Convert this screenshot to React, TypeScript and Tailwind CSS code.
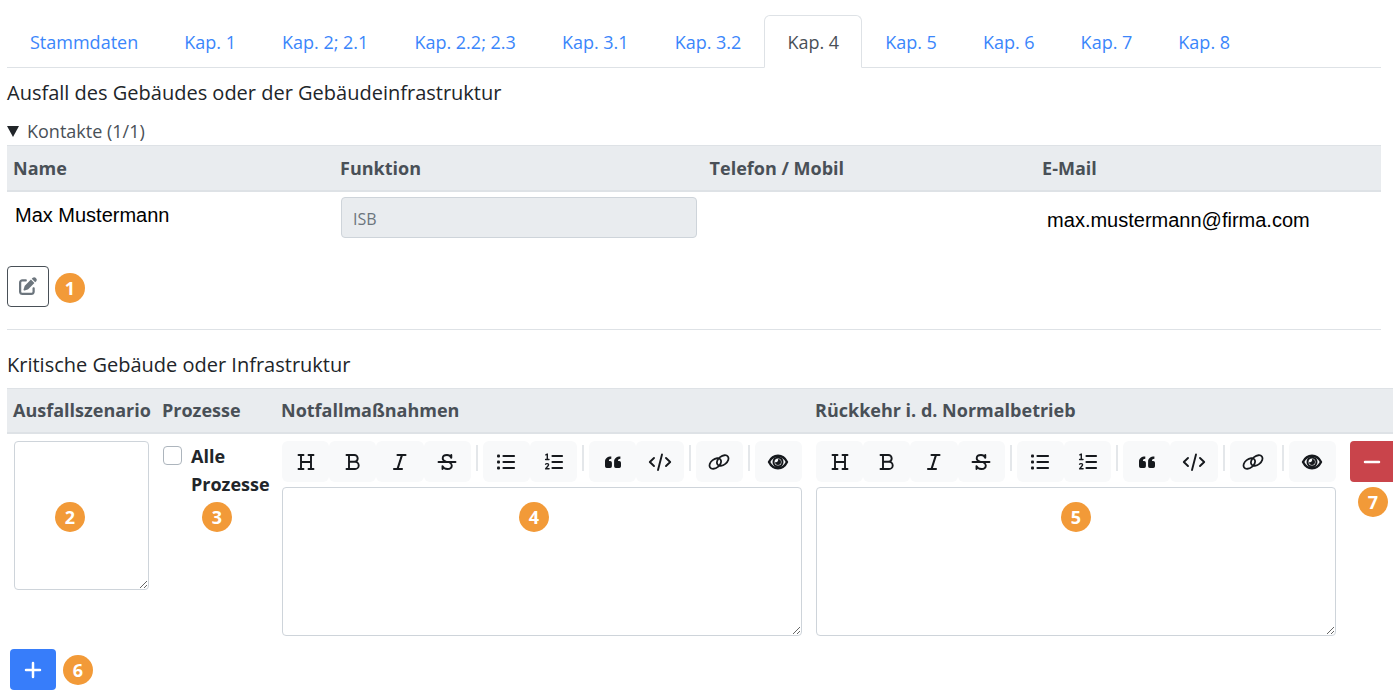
import { Fragment } from "react";
import type { ReactNode } from "react";
import { FaPenToSquare } from "react-icons/fa6";

const tabs = [
  "Stammdaten",
  "Kap. 1",
  "Kap. 2; 2.1",
  "Kap. 2.2; 2.3",
  "Kap. 3.1",
  "Kap. 3.2",
  "Kap. 4",
  "Kap. 5",
  "Kap. 6",
  "Kap. 7",
  "Kap. 8",
];

function Glyph({ children }: { children: ReactNode }) {
  return (
    <svg
      width="24"
      height="24"
      viewBox="0 0 24 24"
      fill="none"
      stroke="currentColor"
      strokeWidth="1.9"
      strokeLinecap="round"
      strokeLinejoin="round"
      aria-hidden="true"
    >
      {children}
    </svg>
  );
}

const icons = {
  heading: <path d="M4.5 5h5M14.5 5h5M4.5 19h5M14.5 19h5M7 5v14M17 5v14M7 12h10" />,
  bold: <path d="M5.5 5h7.8a3.4 3.4 0 0 1 0 6.8H8M5.5 19h8.6a3.6 3.6 0 0 0 0-7.2H13M8 5v14" />,
  italic: <path strokeWidth="2.1" d="M9.5 5h8M6 19h8M14 5l-4.500 14" />,
  strike: (
    <>
      <path d="M16.300 5v2.800C15.500 6 14 5 12 5 9.500 5 7.700 6.300 7.700 8.300c0 1.700 1.200 2.700 3.300 3.300M14.500 12.500c1.500.700 2.300 1.600 2.300 3 0 2.100-1.900 3.500-4.400 3.500-2.300 0-4.100-1-4.900-2.800V19" />
      <path d="M3.500 12h17" />
    </>
  ),
  bullets: (
    <>
      <path strokeWidth="2.200" d="M9.500 6h10.500M9.500 12h10.500M9.500 18h10.500" />
      <g fill="currentColor" stroke="none">
        <rect x="3" y="4.500" width="3" height="3" rx="1" />
        <rect x="3" y="10.500" width="3" height="3" rx="1" />
        <rect x="3" y="16.500" width="3" height="3" rx="1" />
      </g>
    </>
  ),
  numbers: (
    <>
      <path strokeWidth="2.200" d="M10.500 6H20M10.500 12H20M10.500 18H20" />
      <path strokeWidth="1.400" d="M3.800 4.800 5.300 4v5M3.600 9.500h3.400M3.600 14.200c.4-.8 3-1 3 .6 0 1.200-1.700 2-3 4h3.500" />
    </>
  ),
  quote: (
    <path
      fill="currentColor"
      stroke="none"
      d="M10.300 6.500v2.300C8.700 8.800 7.900 9.500 7.900 11h1.300a1.700 1.700 0 0 1 1.700 1.700v3.500a1.700 1.700 0 0 1-1.700 1.700H5.700A1.700 1.700 0 0 1 4 16.200v-4.400c0-3.300 2.200-5.300 6.300-5.300zM19.400 6.500v2.300C17.800 8.800 17 9.500 17 11h1.300a1.700 1.700 0 0 1 1.700 1.700v3.500a1.700 1.700 0 0 1-1.700 1.700h-3.500a1.700 1.700 0 0 1-1.700-1.700v-4.400c0-3.300 2.200-5.300 6.300-5.300z"
    />
  ),
  code: <path d="M6 8 1.800 12 6 16M18 8l4.200 4L18 16M14 4.500 10 20" />,
  link: (
    <g strokeWidth="1.800">
      <ellipse cx="8.300" cy="13.500" rx="6.600" ry="4.300" transform="rotate(-38 8.300 13.500)" />
      <ellipse cx="15.700" cy="10.500" rx="6.600" ry="4.300" transform="rotate(-38 15.700 10.500)" />
    </g>
  ),
  eye: (
    <>
      <path strokeWidth="2.400" d="M3 12c2-4 5.300-6.200 9-6.200s7 2.200 9 6.200c-2 4-5.300 6.200-9 6.200S5 16 3 12z" />
      <circle cx="12" cy="12" r="4.500" strokeWidth="2" />
      <path fill="currentColor" stroke="none" d="M12 9a3 3 0 1 1-3 3c1.600 1 3.800-.8 3-3z" />
    </>
  ),
};

const toolGroups = [
  [
    { label: "Überschrift", icon: icons.heading },
    { label: "Fett", icon: icons.bold },
    { label: "Kursiv", icon: icons.italic },
    { label: "Durchgestrichen", icon: icons.strike },
  ],
  [
    { label: "Liste", icon: icons.bullets },
    { label: "Nummerierte Liste", icon: icons.numbers },
  ],
  [
    { label: "Zitat", icon: icons.quote },
    { label: "Code", icon: icons.code },
  ],
  [{ label: "Link", icon: icons.link }],
  [{ label: "Vorschau", icon: icons.eye }],
];

function Badge({ children, className = "" }: { children: ReactNode; className?: string }) {
  return (
    <span
      className={`flex size-[30px] items-center justify-center rounded-full bg-[#f29a38] text-lg font-bold text-white ${className}`}
    >
      {children}
    </span>
  );
}

function Editor({ label }: { label: string }) {
  return (
    <div>
      <div className="flex h-[41px]" role="toolbar" aria-label={label}>
        {toolGroups.map((group, index) => (
          <Fragment key={index}>
            {index > 0 && <span className="mx-[5px] mt-1 h-[26px] w-[2px] shrink-0 bg-[#e4e7ea]" />}
            {group.map(({ label: name, icon }) => (
              <button
                key={name}
                type="button"
                aria-label={name}
                className="flex flex-1 items-center justify-center rounded-md bg-[#f8f9fa] text-[#16191d]"
              >
                <Glyph>{icon}</Glyph>
              </button>
            ))}
          </Fragment>
        ))}
      </div>
      <textarea
        aria-label={label}
        className="mt-[5px] block h-[149px] w-full resize rounded border border-[#ced4da] bg-white p-2"
      />
    </div>
  );
}

const headRow = "h-[45px] border-t border-b-2 border-t-[#dee2e6] border-b-[#dee2e6] bg-[#e9ecef] text-left text-[#495057]";
const headCell = "px-[6px] font-bold";

export default function App() {
  return (
    <main className="min-h-screen bg-white pt-[15px] pr-[7px] pl-[7px] font-['Open_Sans','Noto_Sans',sans-serif] text-lg leading-7 text-[#212529]">
      <div className="mr-3">
        <nav className="flex border-b border-[#dee2e6]">
          {tabs.map((tab) => (
            <a
              key={tab}
              href="#"
              aria-current={tab === "Kap. 4" ? "page" : undefined}
              className={`-mb-px rounded-t-md border px-[22px] pt-3 pb-[11px] whitespace-nowrap ${
                tab === "Kap. 4"
                  ? "border-[#dee2e6] border-b-white bg-white text-[#495057]"
                  : "border-transparent text-[#3b86fb]"
              }`}
            >
              {tab}
            </a>
          ))}
        </nav>

        <h2 className="mt-[11px] text-xl font-medium">Ausfall des Gebäudes oder der Gebäudeinfrastruktur</h2>

        <details open className="mt-[10px]">
          <summary className="flex list-none items-center gap-2 text-[#495057]">
            <svg width="12" height="12" viewBox="0 0 12 12" className="text-[#212529]">
              <path d="M0 1h12L6 12z" fill="currentColor" />
            </svg>
            Kontakte (1/1)
          </summary>
          <table className="w-full table-fixed border-collapse">
            <thead>
              <tr className={headRow}>
                <th className={`w-[23.8%] ${headCell}`}>Name</th>
                <th className={`w-[26.9%] ${headCell}`}>Funktion</th>
                <th className={`w-[24.2%] ${headCell}`}>Telefon / Mobil</th>
                <th className={headCell}>E-Mail</th>
              </tr>
            </thead>
            <tbody className="font-['Liberation_Sans',Arial,sans-serif] text-xl text-black">
              <tr className="h-[54px]">
                <td className="px-2 pb-[6px]">Max Mustermann</td>
                <td className="px-[7px] pb-[2px]">
                  <input
                    readOnly
                    aria-label="Funktion"
                    value="ISB"
                    className="block h-[41px] w-full rounded border border-[#ced4da] bg-[#e9ecef] px-[11px] pt-1 font-['Open_Sans','Noto_Sans',sans-serif] text-base text-[#6c757d]"
                  />
                </td>
                <td />
                <td className="px-[11px] pt-1">max.mustermann@firma.com</td>
              </tr>
            </tbody>
          </table>
        </details>

        <div className="mt-[21px] flex items-center gap-[6px]">
          <button
            type="button"
            aria-label="Kontakte bearbeiten"
            className="flex h-[41px] w-[42px] items-center justify-center rounded border border-[#495057] text-[#6c757d]"
          >
            <FaPenToSquare size={18} />
          </button>
          <Badge className="mt-1">1</Badge>
        </div>

        <hr className="mt-[22px] border-[#dee2e6]" />
        <h2 className="mt-[21px] text-xl font-medium">Kritische Gebäude oder Infrastruktur</h2>
      </div>

      <table className="mt-[9px] w-full table-fixed border-collapse">
        <thead>
          <tr className={headRow}>
            <th className={`w-[149px] ${headCell}`}>Ausfallszenario</th>
            <th className={`w-[119px] ${headCell}`}>Prozesse</th>
            <th className={headCell}>Notfallmaßnahmen</th>
            <th className={headCell}>Rückkehr i. d. Normalbetrieb</th>
            <td className="w-[50px]" />
          </tr>
        </thead>
        <tbody>
          <tr className="align-top">
            <td className="relative px-[7px] pt-[7px]">
              <textarea
                aria-label="Ausfallszenario"
                className="block h-[149px] w-full resize rounded border border-[#ced4da] bg-white p-2"
              />
              <Badge className="absolute top-[68px] left-12">2</Badge>
            </td>
            <td className="relative pt-2 pl-[7px]">
              <label className="flex gap-[9px] font-bold">
                <input
                  type="checkbox"
                  className="mt-1 size-[19px] shrink-0 appearance-none rounded border border-[#adb5bd] bg-white"
                />
                <span>Alle Prozesse</span>
              </label>
              <Badge className="absolute top-[68px] left-[46px]">3</Badge>
            </td>
            <td className="relative px-[7px] pt-[7px]">
              <Editor label="Notfallmaßnahmen" />
              <Badge className="absolute top-[68px] left-1/2 -ml-[23px]">4</Badge>
            </td>
            <td className="relative px-[7px] pt-[7px]">
              <Editor label="Rückkehr i. d. Normalbetrieb" />
              <Badge className="absolute top-[68px] left-1/2 -ml-[15px]">5</Badge>
            </td>
            <td className="pt-[7px] pl-[7px]">
              <button
                type="button"
                aria-label="Zeile entfernen"
                className="flex h-[41px] w-full items-center justify-center rounded-l bg-[#c9444b] text-white"
              >
                <svg width="18" height="18" viewBox="0 0 18 18" aria-hidden="true">
                  <path d="M2 9h14" stroke="currentColor" strokeWidth="2.500" strokeLinecap="round" />
                </svg>
              </button>
              <Badge className="mt-[5px] ml-2">7</Badge>
            </td>
          </tr>
        </tbody>
      </table>

      <div className="mt-[13px] ml-[3px] flex items-center gap-[7px]">
        <button
          type="button"
          aria-label="Zeile hinzufügen"
          className="flex h-[41px] w-[46px] items-center justify-center rounded bg-[#377dfa] text-white"
        >
          <svg width="18" height="18" viewBox="0 0 18 18" aria-hidden="true">
            <path d="M2 9h14M9 2v14" stroke="currentColor" strokeWidth="2.500" strokeLinecap="round" />
          </svg>
        </button>
        <Badge>6</Badge>
      </div>
    </main>
  );
}
